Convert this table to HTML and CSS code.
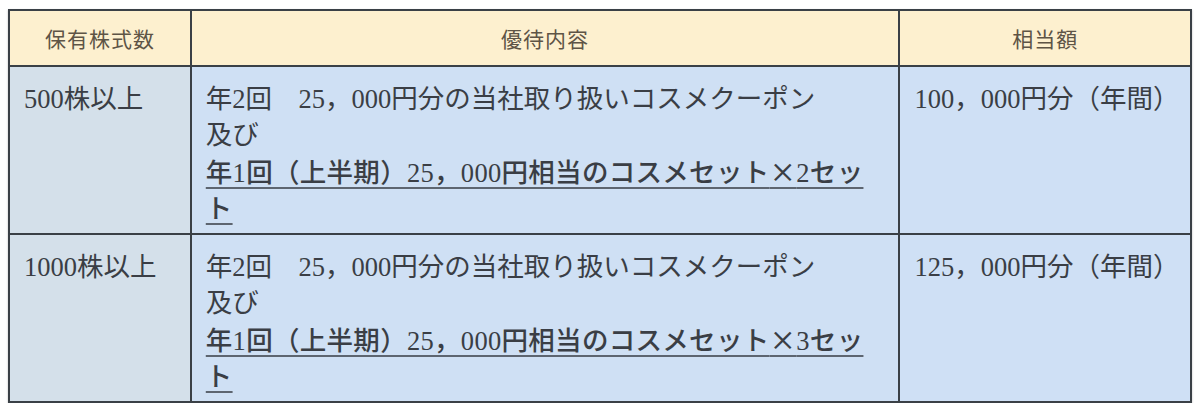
FILE: index.html
```html
<!DOCTYPE html>
<html lang="ja">
<head>
<meta charset="utf-8">
<title>株主優待</title>
<link rel="stylesheet" href="styles.css">
</head>
<body>
<table class="benefit">
  <colgroup>
    <col class="c1">
    <col class="c2">
    <col class="c3">
  </colgroup>
  <thead>
    <tr>
      <th>保有株式数</th>
      <th>優待内容</th>
      <th>相当額</th>
    </tr>
  </thead>
  <tbody>
    <tr>
      <td class="shares">500株以上</td>
      <td class="content">年2回　25，000円分の当社取り扱いコスメクーポン<br>及び<br><span class="em">年1回（上半期）25，000円相当のコスメセット<span class="cjk">×</span>2セッ<br>ト</span></td>
      <td class="amount">100，000円分（年間）</td>
    </tr>
    <tr>
      <td class="shares">1000株以上</td>
      <td class="content">年2回　25，000円分の当社取り扱いコスメクーポン<br>及び<br><span class="em">年1回（上半期）25，000円相当のコスメセット<span class="cjk">×</span>3セッ<br>ト</span></td>
      <td class="amount">125，000円分（年間）</td>
    </tr>
  </tbody>
</table>
</body>
</html>
```

FILE: styles.css
```css
html, body {
  margin: 0;
  background: #ffffff;
}

body {
  padding: 9px 8px 0 8px;
  font-family: "Liberation Serif", "Noto Sans CJK JP", serif;
  color: #3a3e45;
}

.benefit {
  width: 1184px;
  border-collapse: collapse;
  border: 2px solid #3a4046;
  box-shadow: 0 1px 2px rgba(0, 0, 0, 0.25);
}

.c1 { width: 182px; }
.c2 { width: 710px; }
.c3 { width: 292px; }

.benefit th {
  height: 54px;
  padding: 0;
  background: #fdf0cf;
  border: 2px solid #3a4046;
  font-size: 21px;
  font-weight: 400;
  letter-spacing: 1px;
  color: #5e5446;
  text-align: center;
  vertical-align: middle;
}

.benefit td {
  padding: 15px 12px 6px 14px;
  border: 2px solid #3a4046;
  font-size: 26.5px;
  line-height: 35.5px;
  vertical-align: top;
  text-align: left;
  background: #cfe0f4;
}

.benefit td.shares {
  background: #d4e0ea;
}

.benefit td.amount {
  background: #cfe0f5;
}

.em {
  font-weight: 500;
  letter-spacing: 0.3px;
  text-decoration: underline;
  text-decoration-color: #5d6570;
  text-decoration-thickness: 2px;
  text-underline-offset: 5px;
}

.cjk {
  font-family: "Noto Sans CJK JP", sans-serif;
}
```
